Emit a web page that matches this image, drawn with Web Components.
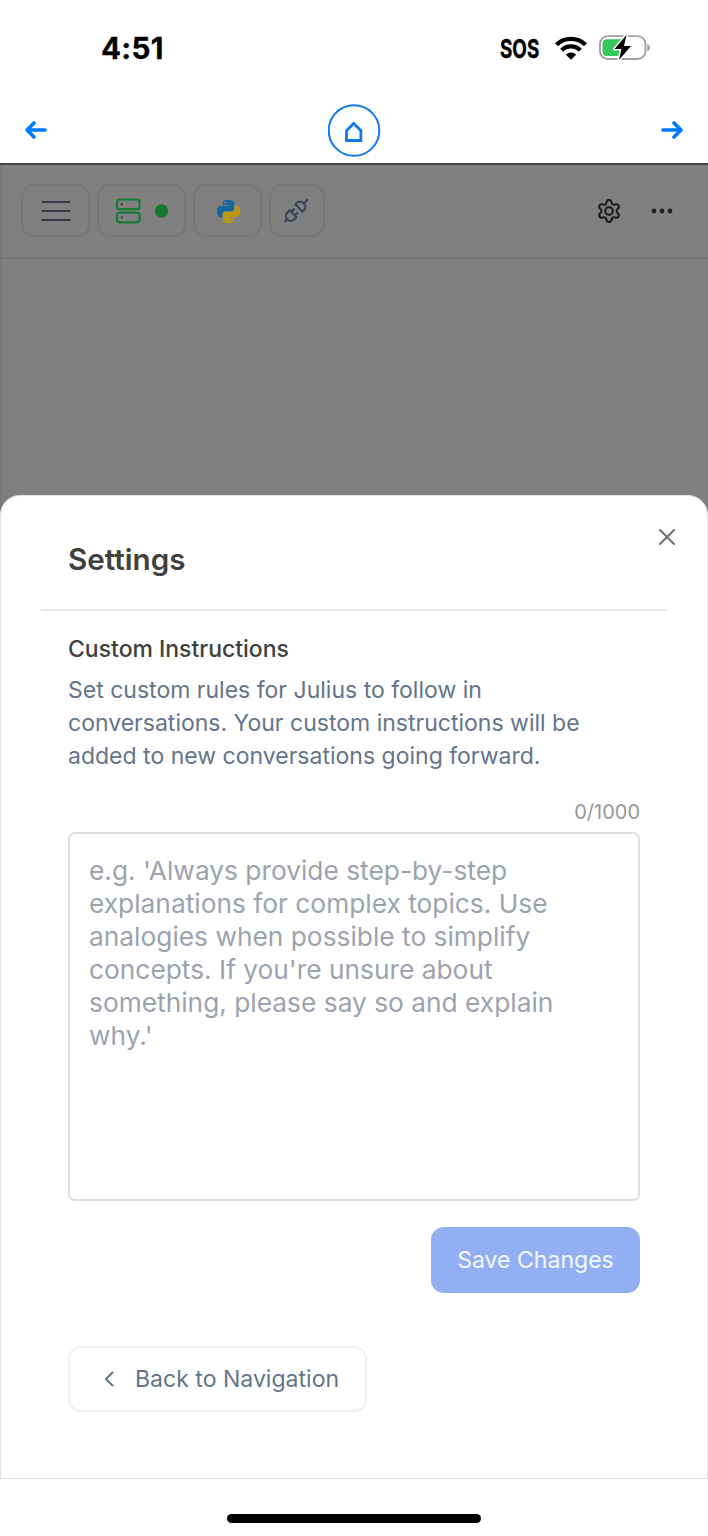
<!DOCTYPE html>
<html lang="en"><head><meta charset="utf-8"><title>Settings</title>
<style>html,body{margin:0;background:#fff}body{font-family:Inter,"Liberation Sans",sans-serif}</style></head>
<body><phone-screen></phone-screen>
<script>
const define=(name,html)=>customElements.define(name,class extends HTMLElement{
  constructor(){super();const t=document.createElement('template');t.innerHTML=html;
    this.attachShadow({mode:'open'}).append(t.content.cloneNode(true));}
});

define('status-bar',`<style>
:host{display:flex;box-sizing:border-box;height:97px;padding:0 57px 2px 101px;align-items:center;color:#000}
.time{font-size:29.6px;font-weight:700;line-height:36px;margin-right:auto;letter-spacing:.3px;-webkit-text-stroke:.3px #000}
.sos{width:40px;height:32px;line-height:32px;font-size:25.5px;font-weight:700;margin-top:2px}
.sos span{display:inline-block;transform:scaleX(.74);transform-origin:0 50%;-webkit-text-stroke:.4px #000}
svg{display:block}.wifi{margin:0 12px 0 15px}
</style><div class="time">4:51</div><div class="sos"><span>SOS</span></div>
<svg class="wifi" width="32" height="24" viewBox="0 0 32 24"><g fill="none" stroke="#000" stroke-width="4.3"><path d="M1.500 8.700a21 21 0 0 1 29 0"/><path d="M6.700 14.300a13.200 13.200 0 0 1 18.600 0"/></g><path d="M10.800 18.700a7.400 7.400 0 0 1 10.400 0L16 23.800z"/></svg>
<svg width="52" height="26" viewBox="0 0 52 26"><rect x="1" y="1.200" width="45.500" height="22.800" rx="7.800" fill="#fff" stroke="#a0a0a2" stroke-width="1.800"/><path d="M8 4.300h14v16.800H8q-4.500 0-4.500-4.500v-7.800Q3.500 4.300 8 4.300z" fill="#34c759"/><path d="M48.300 9q2.700 1 2.700 3.700t-2.700 3.700z" fill="#a0a0a2"/><path d="M27.500 0 15.500 14h7L19.800 25.200 32 11h-7z" fill="#000" stroke="#fff" stroke-width="3" paint-order="stroke" stroke-linejoin="round"/></svg>`);

define('browser-nav',`<style>
:host{display:flex;box-sizing:border-box;height:66px;padding:0 24px;align-items:center;justify-content:space-between}
svg{display:block}.home{width:53px;height:53px}
</style>
<svg width="24" height="22" viewBox="0 0 24 22" fill="none" stroke="#007aff" stroke-width="3.700" stroke-linecap="round" stroke-linejoin="round"><path d="M21 11H3.500M10 4 3 11l7 7"/></svg>
<svg class="home" viewBox="0.500 0 53 53" fill="none" stroke="#1279ec"><circle cx="26.500" cy="26.500" r="25.300" stroke-width="2"/><path d="M19 36.500v-9.800l7.200-7.200 7.200 7.200v9.800z" stroke-width="2.800"/></svg>
<svg width="24" height="22" viewBox="0 0 24 22" fill="none" stroke="#007aff" stroke-width="3.700" stroke-linecap="round" stroke-linejoin="round"><path d="M3 11h17.500M14 4l7 7-7 7"/></svg>`);

define('tool-chip',`<style>
:host{display:flex;box-sizing:border-box;height:53px;border:2px solid #787879;border-radius:13px;align-items:center;justify-content:center}
</style><slot></slot>`);

customElements.define('gear-icon',class extends HTMLElement{
  constructor(){super();
    let d='';
    for(let i=0;i<180;i++){const a=i*Math.PI/90,w=Math.cos(6*a),s=Math.tanh(1.5*w)/Math.tanh(1.5),
      r=9.300+1.600*s;d+=(i?'L':'M')+(13+r*Math.sin(a)).toFixed(2)+' '+(13-r*Math.cos(a)).toFixed(2);}
    this.attachShadow({mode:'open'}).innerHTML='<style>:host{display:block}svg{display:block}</style><svg width="26" height="26" viewBox="0 0 26 26" fill="none" stroke="#202020" stroke-width="2.200" stroke-linejoin="round"><path d="'+d+'z"/><circle cx="13" cy="13" r="3.800"/></svg>';}
});

define('app-toolbar',`<style>
:host{display:flex;box-sizing:border-box;height:94px;padding:0 35px 1px 21px;gap:7px;align-items:center;border-bottom:2px solid #76787e}
.menu{width:69px}.server{width:89px}.python{width:69px}.plug{width:56px}
svg{display:block}.spacer{flex:1}gear-icon{margin-right:22px}
</style>
<tool-chip class="menu"><svg width="30" height="22" viewBox="0 0 30 22" stroke="#323949" stroke-width="2" stroke-linecap="round"><path d="M1.500 2h27M1.500 11h27M1.500 20h27"/></svg></tool-chip>
<tool-chip class="server"><svg width="54" height="26" viewBox="0 0 54 26"><g fill="none" stroke="#197a3b" stroke-width="2.200"><rect x="2" y="1.500" width="22.500" height="9.700" rx="2.200"/><rect x="2" y="14.600" width="22.500" height="9.700" rx="2.200"/></g><g fill="#38543f"><circle cx="6.800" cy="6.300" r="1.200"/><circle cx="6.800" cy="19.400" r="1.200"/></g><circle cx="46.500" cy="13" r="6.700" fill="#12792f"/></svg></tool-chip>
<tool-chip class="python"><svg width="23" height="23" viewBox="0 0 24 24" style="margin:1px 0 0 1px"><path fill="#17679a" d="M14.250.180l.9.200.730.260.590.300.450.320.340.340.250.340.160.330.100.300.040.260.020.200-.010.130V8.500l-.050.630-.130.550-.210.460-.260.380-.300.310-.330.250-.350.190-.350.140-.330.100-.300.070-.260.040-.210.020H8.770l-.690.050-.590.140-.500.220-.410.270-.330.320-.270.350-.200.360-.150.370-.100.350-.070.320-.040.270-.020.210v3.060H3.170l-.210-.030-.280-.070-.320-.120-.350-.180-.360-.260-.360-.360-.350-.460-.320-.590-.280-.730-.210-.880-.140-1.050-.050-1.230.060-1.220.160-1.040.240-.870.320-.710.360-.570.400-.440.420-.330.420-.240.400-.160.360-.100.320-.050.240-.010h8.380v-.830H6.180l-.010-2.750-.020-.370.050-.340.110-.310.170-.280.250-.260.310-.230.380-.200.440-.180.510-.150.580-.120.640-.100.710-.060.770-.040.840-.020 1.270.050zM7.950 2.160l-.230.330-.080.410.080.410.230.340.330.220.410.090.410-.090.330-.220.230-.340.080-.410-.080-.410-.230-.330-.330-.220-.410-.090-.410.090z"/><path fill="#bb9814" d="M21.100 6.110l.280.060.320.120.350.180.360.270.360.350.350.470.320.590.280.730.210.880.140 1.040.050 1.230-.060 1.230-.160 1.040-.240.860-.320.710-.360.570-.400.450-.420.330-.420.240-.400.160-.360.090-.320.050-.240.020h-8.380v.810h5.840l.010 2.760.020.360-.050.340-.110.310-.170.290-.250.250-.310.240-.380.200-.440.170-.510.150-.580.130-.640.090-.710.070-.770.040-.840.010-1.270-.040-1.070-.140-.900-.200-.730-.250-.590-.300-.450-.330-.340-.340-.250-.340-.160-.330-.100-.300-.040-.250-.020-.200.010-.130v-5.340l.050-.640.130-.540.210-.460.260-.380.300-.320.330-.240.350-.200.350-.140.330-.100.300-.060.260-.040.210-.020h5.970l.690-.050.590-.140.500-.210.410-.280.330-.320.270-.350.200-.360.150-.360.100-.350.070-.320.040-.280.020-.210V6.070h2.090z"/><circle cx="15.600" cy="21.100" r="1.100" fill="#808080"/></svg></tool-chip>
<tool-chip class="plug"><svg width="28" height="28" viewBox="-14 -14 28 28"><g transform="translate(-.8 -.3) rotate(-44) scale(.96)" fill="none" stroke="#3c4657" stroke-width="2.300" stroke-linecap="round" stroke-linejoin="round"><path d="M-16 0h3M-4.500-5v10h-3.500a5 5 0 0 1-5-5 5 5 0 0 1 5-5zM-4.500-2.700h4M-4.500 2.700h4M4-5.300v10.600h2a5 5 0 0 0 5-5.300 5 5 0 0 0-5-5.300zM12 0h4"/></g></svg></tool-chip>
<div class="spacer"></div><gear-icon></gear-icon>
<svg width="22" height="6" viewBox="0 0 22 6" fill="#202020"><circle cx="3" cy="3" r="2.400"/><circle cx="11" cy="3" r="2.400"/><circle cx="19" cy="3" r="2.400"/></svg>`);

define('action-button',`<style>
:host{display:flex;box-sizing:border-box;height:66px;border-radius:13px;align-items:center;font-size:23.050px;line-height:33px;white-space:nowrap}
:host([kind=primary]){width:209px;justify-content:center;background:#92aff4;color:#f5f8fe}
:host([kind=outline]){width:299px;border:2px solid #efeff0;color:#64748b;padding-left:33px;gap:19px}
</style><slot></slot>`);

define('instructions-field',`<style>
:host{display:block}
.count{text-align:right;color:#979797;font-size:20px;line-height:27px}
.box{box-sizing:border-box;height:369px;margin-top:6px;padding:20px 19px;border:2px solid #dcdfe2;border-radius:7px;color:#9ca3af;font-size:26.320px;line-height:33px;white-space:nowrap}
</style><div class="count">0/1000</div><div class="box"><slot></slot></div>`);

define('settings-sheet',`<style>
:host{display:flex;flex-direction:column;box-sizing:border-box;height:984px;padding:0 67px;background:#fff;border:1px solid #e2e2e2;border-radius:20px 20px 0 0}
header{display:flex;justify-content:space-between;box-sizing:border-box;height:115px;margin:0 -27px 0 -27px;padding:45px 0 0 27px;border-bottom:2px solid #e9eaed}
h1{margin:0;font-size:29.640px;font-weight:600;line-height:36px;color:#404040}
header svg{margin:-13px -9px 0 0}
h2{margin:22px 0 0;font-size:22.980px;font-weight:500;line-height:33px;color:#404040}
p{margin:8px 0 26px;font-size:23.020px;line-height:33px;color:#64748b;white-space:nowrap}
.save{align-self:flex-end;margin-top:26px}.back{margin-top:53px}svg{display:block}
</style>
<header><h1>Settings</h1><svg width="18" height="18" viewBox="0 0 18 18" stroke="#707070" stroke-width="2" stroke-linecap="round"><path d="m2 2 14 14M16 2 2 16"/></svg></header>
<h2>Custom Instructions</h2>
<p>Set custom rules for Julius to follow in<br>conversations. Your custom instructions will be<br>added to new conversations going forward.</p>
<instructions-field>e.g. 'Always provide step-by-step<br>explanations for complex topics. Use<br>analogies when possible to simplify<br>concepts. If you're unsure about<br>something, please say so and explain<br>why.'</instructions-field>
<action-button class="save" kind="primary">Save Changes</action-button>
<action-button class="back" kind="outline"><svg width="13" height="18" viewBox="0 0 13 18" fill="none" stroke="#64748b" stroke-width="2.100" stroke-linecap="round" stroke-linejoin="round"><path d="M9.500 2.500 3 9l6.500 6.500"/></svg><span>Back to Navigation</span></action-button>`);

define('phone-screen',`<style>
:host{display:block;width:708px;height:1536px;overflow:hidden;background:#fff}
.view{display:flex;flex-direction:column;justify-content:space-between;box-sizing:border-box;height:1316px;background:linear-gradient(90deg,#74777c 1px,#808080 2px);border-top:2px solid #464646}
.home-bar{width:254px;height:9px;border-radius:5px;background:#000;margin:35px auto 0}
</style><status-bar></status-bar><browser-nav></browser-nav>
<div class="view"><app-toolbar></app-toolbar><settings-sheet></settings-sheet></div><div class="home-bar"></div>`);
</script></body></html>
